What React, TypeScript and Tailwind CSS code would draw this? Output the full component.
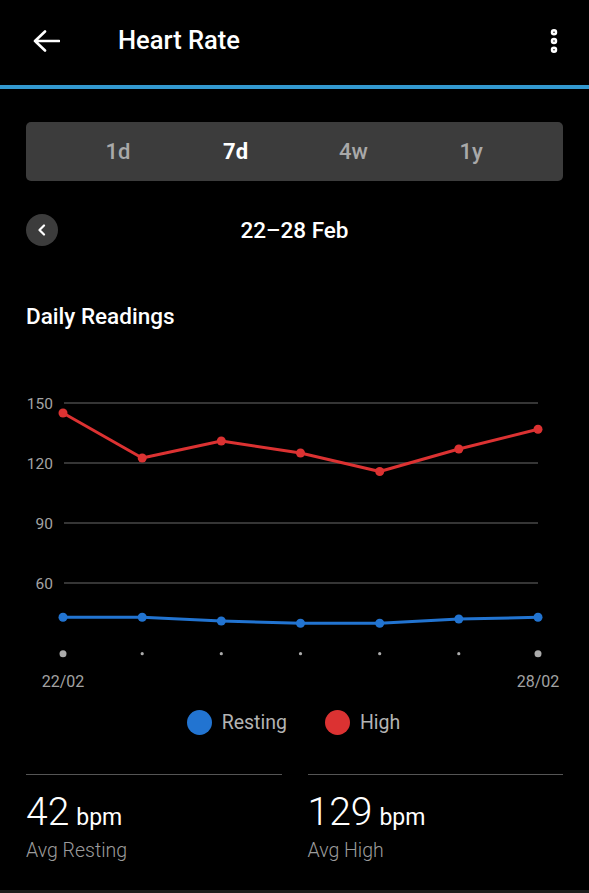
import { MoreVertical } from "lucide-react";

const xs = [63, 142.2, 221.3, 300.5, 379.7, 458.8, 538];
const high = [412, 457, 440, 452, 470.5, 448, 428.3];
const resting = [616.3, 616.3, 620, 622.3, 622.3, 618, 616.3];
const grid = [
  { y: 402, label: "150" },
  { y: 462, label: "120" },
  { y: 522, label: "90" },
  { y: 582, label: "60" },
];
const TOP = 385;

const toPoints = (ys: number[]) => ys.map((y, i) => `${xs[i]},${y - TOP}`).join(" ");

const ReadingsChart = () => (
  <svg width="589" height="310" viewBox="0 0 589 310" className="block">
    {grid.map((g) => (
      <g key={g.label}>
        <line x1={64} x2={538} y1={g.y - TOP} y2={g.y - TOP} stroke="#474747" strokeWidth={1.5} />
        <text
          x={53}
          y={g.y - TOP + 5.5}
          textAnchor="end"
          fill="#a3a3a3"
          fontSize={15.5}
          fontFamily="Roboto, sans-serif"
        >
          {g.label}
        </text>
      </g>
    ))}

    <polyline points={toPoints(high)} fill="none" stroke="#dc3232" strokeWidth={3} strokeLinejoin="round" />
    {high.map((y, i) => (
      <circle key={i} cx={xs[i]} cy={y - TOP} r={4.5} fill="#dc3232" />
    ))}

    <polyline points={toPoints(resting)} fill="none" stroke="#2274d1" strokeWidth={3} strokeLinejoin="round" />
    {resting.map((y, i) => (
      <circle key={i} cx={xs[i]} cy={y - TOP} r={4.5} fill="#2274d1" />
    ))}

    {xs.map((x, i) => (
      <circle
        key={i}
        cx={x}
        cy={652.7 - TOP}
        r={i === 0 || i === xs.length - 1 ? 3.5 : 1.6}
        fill="#ababab"
      />
    ))}

    <text x={63} y={686 - TOP} textAnchor="middle" fill="#a3a3a3" fontSize={16} fontFamily="Roboto, sans-serif">
      22/02
    </text>
    <text x={538} y={686 - TOP} textAnchor="middle" fill="#a3a3a3" fontSize={16} fontFamily="Roboto, sans-serif">
      28/02
    </text>
  </svg>
);

const Stat = ({ value, label }: { value: string; label: string }) => (
  <div className="flex flex-col">
    <div className="h-[1.5px] bg-[#555555]" />
    <div className="mt-[17px] flex items-baseline gap-[7px] text-white leading-[40px]">
      <span className="text-[39px] font-light">{value}</span>
      <span className="text-[23px] font-normal">bpm</span>
    </div>
    <div className="mt-[1px] text-[19.5px] leading-[24px] font-light text-[#9c9c9c]">{label}</div>
  </div>
);

export default function App() {
  return (
    <div className="h-[893px] w-[589px] bg-black flex flex-col font-['Roboto',sans-serif] overflow-hidden">
      {/* Header */}
      <header className="h-[85px] flex items-center px-[33px] shrink-0">
        <svg width="27" height="22" viewBox="0 0 27 22" className="shrink-0 -mt-[4px]">
          <path d="M2 11H26M12 1.5 2 11l10 9.5" fill="none" stroke="white" strokeWidth={2.6} strokeLinecap="round" strokeLinejoin="round" />
        </svg>
        <h1 className="ml-[58px] -mt-[4px] text-[25.5px] font-medium text-white">Heart Rate</h1>
        <MoreVertical className="ml-auto -mr-[13px] -mt-[4px] w-[30px] h-[30px] text-white" strokeWidth={3.2} />
      </header>
      <div className="h-[3.5px] bg-[#3399d0] shrink-0" />

      <main className="flex-1 flex flex-col">
        {/* Period tabs */}
        <div className="mx-[26px] mt-[33px] h-[59px] rounded-[5px] bg-[#3c3c3c] grid grid-cols-4 px-[33px] items-center">
          {["1d", "7d", "4w", "1y"].map((p) => (
            <div
              key={p}
              className={
                p === "7d"
                  ? "text-center text-[22px] font-bold text-white"
                  : "text-center text-[22px] font-medium text-[#a9a9a9]"
              }
            >
              {p}
            </div>
          ))}
        </div>

        {/* Date range */}
        <div className="mx-[26px] mt-[33px] grid grid-cols-[32px_1fr_32px] items-center">
          <button className="w-[32px] h-[32px] rounded-full bg-[#3c3c3c] flex items-center justify-center">
            <svg width="10" height="12" viewBox="0 0 10 12">
              <path d="M7 1.5 2.5 6 7 10.5" fill="none" stroke="white" strokeWidth={2.2} strokeLinecap="round" strokeLinejoin="round" />
            </svg>
          </button>
          <div className="text-center text-[22.5px] font-medium text-white">22–28 Feb</div>
          <div />
        </div>

        <h2 className="mx-[26px] mt-[57px] text-[22.5px] leading-[24px] font-medium text-white">Daily Readings</h2>

        {/* Chart */}
        <div className="mt-[58px]">
          <ReadingsChart />
        </div>

        {/* Legend */}
        <div className="mt-[12px] flex justify-center items-center gap-[10px] pr-[2px]">
          <span className="w-[25px] h-[25px] rounded-full bg-[#2274d1]" />
          <span className="text-[19.5px] text-[#b3b3b3]">Resting</span>
          <span className="ml-[28px] w-[25px] h-[25px] rounded-full bg-[#dc3232]" />
          <span className="text-[19.5px] text-[#b3b3b3]">High</span>
        </div>

        {/* Averages */}
        <div className="mx-[26px] mt-[36px] grid grid-cols-2 gap-[26px]">
          <Stat value="42" label="Avg Resting" />
          <Stat value="129" label="Avg High" />
        </div>
      </main>

      <div className="h-[3px] bg-[#1c1c1c] shrink-0" />
    </div>
  );
}
